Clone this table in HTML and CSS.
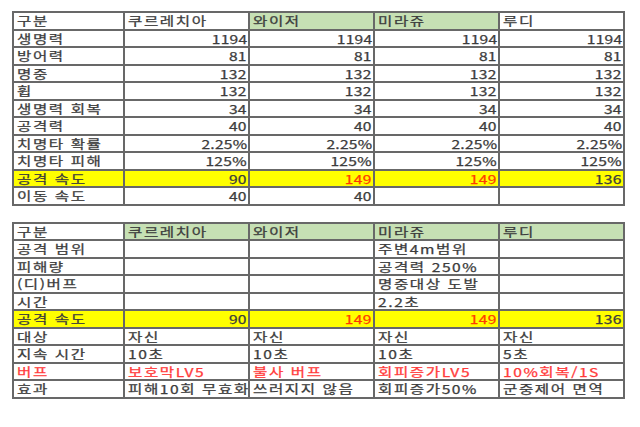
FILE: index.html
```html
<!DOCTYPE html>
<html lang="ko">
<head>
<meta charset="utf-8">
<link rel="stylesheet" href="styles.css">
</head>
<body>
<div class="page">
  <table class="sheet">
    <colgroup><col class="c1"><col class="c"><col class="c"><col class="c"><col class="c"></colgroup>
    <tr><td><span>구분</span></td><td><span>쿠르레치아</span></td><td class="green"><span>와이저</span></td><td class="green"><span>미라쥬</span></td><td><span>루디</span></td></tr>
    <tr><td><span>생명력</span></td><td class="num"><span>1194</span></td><td class="num"><span>1194</span></td><td class="num"><span>1194</span></td><td class="num"><span>1194</span></td></tr>
    <tr><td><span>방어력</span></td><td class="num"><span>81</span></td><td class="num"><span>81</span></td><td class="num"><span>81</span></td><td class="num"><span>81</span></td></tr>
    <tr><td><span>명중</span></td><td class="num"><span>132</span></td><td class="num"><span>132</span></td><td class="num"><span>132</span></td><td class="num"><span>132</span></td></tr>
    <tr><td><span>휩</span></td><td class="num"><span>132</span></td><td class="num"><span>132</span></td><td class="num"><span>132</span></td><td class="num"><span>132</span></td></tr>
    <tr><td><span>생명력 회복</span></td><td class="num"><span>34</span></td><td class="num"><span>34</span></td><td class="num"><span>34</span></td><td class="num"><span>34</span></td></tr>
    <tr><td><span>공격력</span></td><td class="num"><span>40</span></td><td class="num"><span>40</span></td><td class="num"><span>40</span></td><td class="num"><span>40</span></td></tr>
    <tr><td><span>치명타 확률</span></td><td class="num"><span>2.25%</span></td><td class="num"><span>2.25%</span></td><td class="num"><span>2.25%</span></td><td class="num"><span>2.25%</span></td></tr>
    <tr><td><span>치명타 피해</span></td><td class="num"><span>125%</span></td><td class="num"><span>125%</span></td><td class="num"><span>125%</span></td><td class="num"><span>125%</span></td></tr>
    <tr class="yellow"><td><span>공격 속도</span></td><td class="num"><span>90</span></td><td class="num red"><span>149</span></td><td class="num red"><span>149</span></td><td class="num"><span>136</span></td></tr>
    <tr><td><span>이동 속도</span></td><td class="num"><span>40</span></td><td class="num"><span>40</span></td><td></td><td></td></tr>
  </table>

  <table class="sheet">
    <colgroup><col class="c1"><col class="c"><col class="c"><col class="c"><col class="c"></colgroup>
    <tr><td><span>구분</span></td><td class="green"><span>쿠르레치아</span></td><td class="green"><span>와이저</span></td><td class="green"><span>미라쥬</span></td><td class="green"><span>루디</span></td></tr>
    <tr><td><span>공격 범위</span></td><td></td><td></td><td><span>주변4m범위</span></td><td></td></tr>
    <tr><td><span>피해량</span></td><td></td><td></td><td><span>공격력 250%</span></td><td></td></tr>
    <tr><td><span>(디)버프</span></td><td></td><td></td><td><span>명중대상 도발</span></td><td></td></tr>
    <tr><td><span>시간</span></td><td></td><td></td><td><span>2.2초</span></td><td></td></tr>
    <tr class="yellow"><td><span>공격 속도</span></td><td class="num"><span>90</span></td><td class="num red"><span>149</span></td><td class="num red"><span>149</span></td><td class="num"><span>136</span></td></tr>
    <tr><td><span>대상</span></td><td><span>자신</span></td><td><span>자신</span></td><td><span>자신</span></td><td><span>자신</span></td></tr>
    <tr><td><span>지속 시간</span></td><td><span>10초</span></td><td><span>10초</span></td><td><span>10초</span></td><td><span>5초</span></td></tr>
    <tr class="redrow"><td><span>버프</span></td><td><span>보호막LV5</span></td><td><span>불사 버프</span></td><td><span>회피증가LV5</span></td><td><span>10%회복/1S</span></td></tr>
    <tr><td><span>효과</span></td><td><span>피해10회 무효화</span></td><td><span>쓰러지지 않음</span></td><td><span>회피증가50%</span></td><td><span>군중제어 면역</span></td></tr>
  </table>
</div>
</body>
</html>
```

FILE: styles.css
```css
html, body {
  margin: 0;
  padding: 0;
  background: #ffffff;
}

.page {
  padding: 11px 0 0 12px;
  display: flex;
  flex-direction: column;
  gap: 16px;
}

.sheet {
  border-collapse: collapse;
  table-layout: fixed;
  width: 613px;
  font-family: "Noto Sans CJK KR", "Noto Sans", sans-serif;
  font-size: 12px;
  color: #3c3c3c;
}

.c1 { width: 111px; }
.c { width: 125px; }

.sheet td {
  border: 2px solid #686868;
  height: 15.5px;
  padding: 0 2px 0 3px;
  line-height: 15px;
  white-space: nowrap;
  overflow: hidden;
  text-align: left;
  vertical-align: middle;
}

.sheet td span {
  display: inline-block;
  letter-spacing: 1.2px;
  transform: scaleX(1.3);
  transform-origin: left center;
  -webkit-text-stroke: 0.25px currentColor;
}

.sheet td.num {
  text-align: right;
  padding-right: 1px;
}

.sheet td.num span {
  letter-spacing: 0.2px;
  transform-origin: right center;
}

.green { background: #c6e0b4; }

.yellow td { background: #ffff00; }

.red { color: #ff3a00; }

.redrow td { color: #ff3a3a; }
```
